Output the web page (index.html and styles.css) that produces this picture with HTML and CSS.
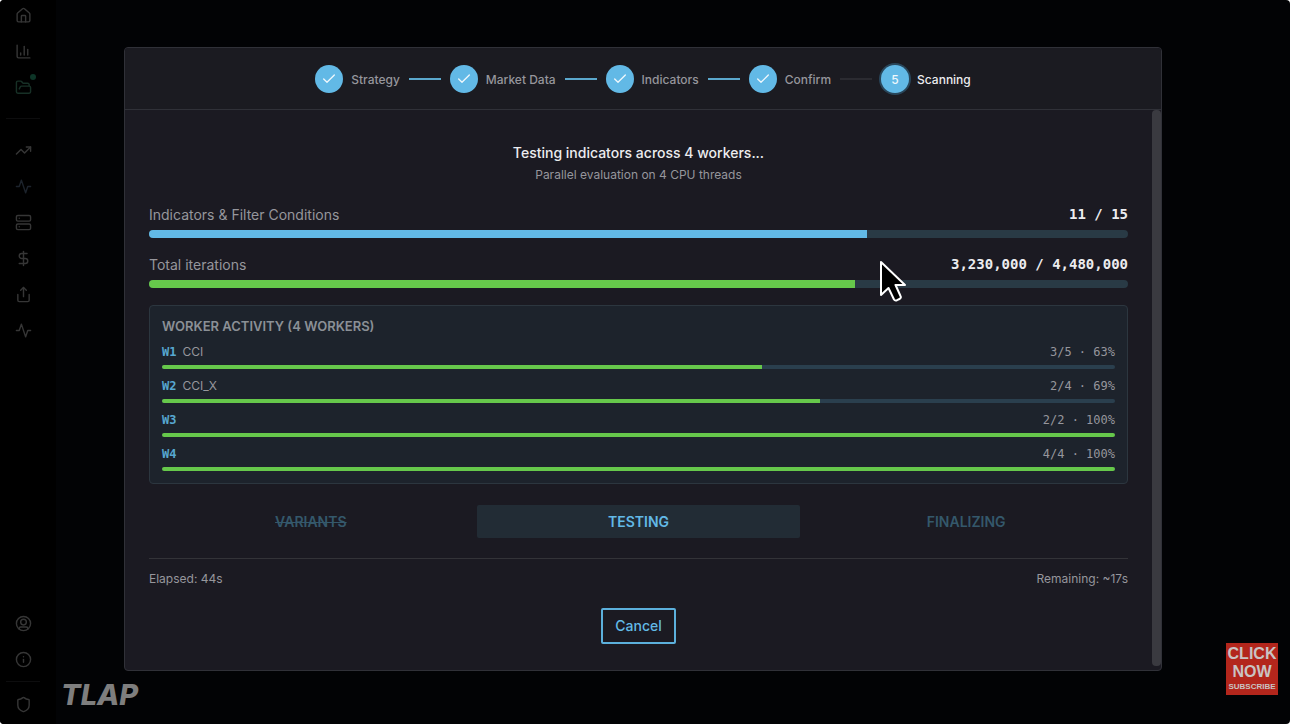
FILE: index.html
```html
<!DOCTYPE html>
<html lang="en">
<head>
    <meta charset="UTF-8">
    <meta name="viewport" content="width=device-width, initial-scale=1.0">
    <title>Indicator Scan</title>
    <link rel="stylesheet" href="styles.css">
</head>
<body>
    <div class="app">
        <nav class="sidebar" aria-label="Main">
            <div class="nav-group">
                <a href="#" class="nav-link" aria-label="Home">
                    <svg class="icon" viewBox="0 0 24 24"><path d="M15 21v-8a1 1 0 0 0-1-1h-4a1 1 0 0 0-1 1v8"/><path d="M3 10a2 2 0 0 1 .7-1.5l7-6a2 2 0 0 1 2.6 0l7 6A2 2 0 0 1 21 10v9a2 2 0 0 1-2 2H5a2 2 0 0 1-2-2z"/></svg>
                </a>
                <a href="#" class="nav-link" aria-label="Charts">
                    <svg class="icon" viewBox="0 0 24 24"><path d="M3 3v16a2 2 0 0 0 2 2h16"/><path d="M8 17v-3"/><path d="M13 17V5"/><path d="M18 17V9"/></svg>
                </a>
                <a href="#" class="nav-link active" aria-label="Projects">
                    <svg class="icon" viewBox="0 0 24 24"><path d="m6 14 1.5-2.9A2 2 0 0 1 9.2 10H20a2 2 0 0 1 2 2v6a2 2 0 0 1-2 2H4a2 2 0 0 1-2-2V5a2 2 0 0 1 2-2h3.9a2 2 0 0 1 1.7.9l.8 1.2a2 2 0 0 0 1.7.9H18a2 2 0 0 1 2 2v2"/></svg>
                    <span class="dot"></span>
                </a>
            </div>
            <div class="nav-group">
                <a href="#" class="nav-link" aria-label="Trends">
                    <svg class="icon" viewBox="0 0 24 24"><path d="M16 7h6v6"/><path d="m22 7-8.5 8.5-5-5L2 17"/></svg>
                </a>
                <a href="#" class="nav-link dim" aria-label="Signals">
                    <svg class="icon" viewBox="0 0 24 24"><path d="M22 12h-4l-3 9L9 3l-3 9H2"/></svg>
                </a>
                <a href="#" class="nav-link" aria-label="Servers">
                    <svg class="icon" viewBox="0 0 24 24"><rect x="2" y="2" width="20" height="8" rx="2"/><rect x="2" y="14" width="20" height="8" rx="2"/><path d="M6 6h.01M6 18h.01"/></svg>
                </a>
                <a href="#" class="nav-link" aria-label="Costs">
                    <svg class="icon" viewBox="0 0 24 24"><path d="M12 2v20"/><path d="M17 5H9.5a3.5 3.5 0 0 0 0 7h5a3.5 3.5 0 0 1 0 7H6"/></svg>
                </a>
                <a href="#" class="nav-link" aria-label="Export">
                    <svg class="icon" viewBox="0 0 24 24"><path d="M12 2v13"/><path d="m16 6-4-4-4 4"/><path d="M4 12v8a2 2 0 0 0 2 2h12a2 2 0 0 0 2-2v-8"/></svg>
                </a>
                <a href="#" class="nav-link" aria-label="Activity">
                    <svg class="icon" viewBox="0 0 24 24"><path d="M22 12h-4l-3 9L9 3l-3 9H2"/></svg>
                </a>
            </div>
            <div class="nav-group bottom">
                <a href="#" class="nav-link" aria-label="Account">
                    <svg class="icon" viewBox="0 0 24 24"><circle cx="12" cy="12" r="10"/><circle cx="12" cy="10" r="4"/><path d="M6 20v-1a2 2 0 0 1 2-2h8a2 2 0 0 1 2 2v1"/></svg>
                </a>
                <a href="#" class="nav-link" aria-label="About">
                    <svg class="icon" viewBox="0 0 24 24"><circle cx="12" cy="12" r="10"/><path d="M12 16v-4"/><path d="M12 8h.01"/></svg>
                </a>
            </div>
            <div class="nav-group">
                <a href="#" class="nav-link" aria-label="Security">
                    <svg class="icon" viewBox="0 0 24 24"><path d="M20 13c0 5-3.5 7.5-7.7 9a1 1 0 0 1-.6 0C7.5 20.5 4 18 4 13V6a1 1 0 0 1 1-1c2 0 4.5-1.2 6.2-2.7a1.2 1.2 0 0 1 1.6 0C14.5 3.8 17 5 19 5a1 1 0 0 1 1 1z"/></svg>
                </a>
            </div>
        </nav>

        <main class="stage">
            <section class="modal" role="dialog" aria-label="Scanning">
                <ol class="steps">
                    <li class="step done">
                        <span class="bullet"><svg viewBox="0 0 24 24"><path d="M20 6 9 17l-5-5"/></svg></span>
                        <span>Strategy</span>
                    </li>
                    <li class="step done">
                        <span class="bullet"><svg viewBox="0 0 24 24"><path d="M20 6 9 17l-5-5"/></svg></span>
                        <span>Market Data</span>
                    </li>
                    <li class="step done">
                        <span class="bullet"><svg viewBox="0 0 24 24"><path d="M20 6 9 17l-5-5"/></svg></span>
                        <span>Indicators</span>
                    </li>
                    <li class="step last-done">
                        <span class="bullet"><svg viewBox="0 0 24 24"><path d="M20 6 9 17l-5-5"/></svg></span>
                        <span>Confirm</span>
                    </li>
                    <li class="step current">
                        <span class="bullet">5</span>
                        <span>Scanning</span>
                    </li>
                </ol>

                <div class="modal-body">
                    <div class="content">
                        <h1>Testing indicators across 4 workers...</h1>
                        <p class="subtitle">Parallel evaluation on 4 CPU threads</p>

                        <div class="totals">
                            <div class="total">
                                <div class="row"><span>Indicators &amp; Filter Conditions</span><span class="count">11 / 15</span></div>
                                <div class="track"><div class="fill blue" style="width: 73.3%"></div></div>
                            </div>
                            <div class="total">
                                <div class="row"><span>Total iterations</span><span class="count">3,230,000 / 4,480,000</span></div>
                                <div class="track"><div class="fill" style="width: 72.1%"></div></div>
                            </div>
                        </div>

                        <div class="workers">
                            <h2>WORKER ACTIVITY (4 WORKERS)</h2>
                            <div class="worker">
                                <div class="row"><span><b>W1</b>CCI</span><span class="stat">3/5 · 63%</span></div>
                                <div class="track"><div class="fill" style="width: 63%"></div></div>
                            </div>
                            <div class="worker">
                                <div class="row"><span><b>W2</b>CCI_X</span><span class="stat">2/4 · 69%</span></div>
                                <div class="track"><div class="fill" style="width: 69%"></div></div>
                            </div>
                            <div class="worker">
                                <div class="row"><span><b>W3</b></span><span class="stat">2/2 · 100%</span></div>
                                <div class="track"><div class="fill" style="width: 100%"></div></div>
                            </div>
                            <div class="worker">
                                <div class="row"><span><b>W4</b></span><span class="stat">4/4 · 100%</span></div>
                                <div class="track"><div class="fill" style="width: 100%"></div></div>
                            </div>
                        </div>

                        <div class="phases">
                            <span class="phase finished">VARIANTS</span>
                            <span class="phase running">TESTING</span>
                            <span class="phase">FINALIZING</span>
                        </div>

                        <div class="times">
                            <span>Elapsed: 44s</span>
                            <span>Remaining: ~17s</span>
                        </div>

                        <button type="button" class="cancel">Cancel</button>
                    </div>
                    <div class="scrollbar"></div>
                </div>
            </section>
        </main>

        <div class="brand">TLAP</div>
        <a href="#" class="subscribe">
            <span>CLICK</span>
            <span>NOW</span>
            <small>SUBSCRIBE</small>
        </a>
        <svg class="cursor" viewBox="0 0 28 42"><path d="M2 2v33l7.5-7 5.5 11.5q1 1.5 3 .7l2.5-1.2q2-1 1-3L16.5 25H26z"/></svg>
    </div>
</body>
</html>
```

FILE: styles.css
```css
* {
    box-sizing: border-box;
}

body {
    margin: 0;
    background: #fff;
    font-family: Inter, "Liberation Sans", sans-serif;
    color: #96969c;
}

.app {
    position: relative;
    display: flex;
    min-height: 100vh;
    background: #020305;
    border-radius: 4px;
    overflow: hidden;
}

/* Sidebar */
.sidebar {
    display: flex;
    flex-direction: column;
    width: 56px;
    padding: 0 16px 5px 6px;
    background: #000;
}

.nav-group {
    display: flex;
    flex-direction: column;
    align-items: center;
    gap: 6px;
}

.nav-group + .nav-group {
    margin-top: 16px;
    padding-top: 16px;
    border-top: 1px solid #0d0d0e;
}

.nav-group + .nav-group.bottom {
    margin-top: auto;
    border-top: 0;
}

.nav-group.bottom + .nav-group {
    margin-top: 7px;
    padding-top: 7px;
}

.nav-link {
    position: relative;
    display: flex;
    align-items: center;
    justify-content: center;
    width: 30px;
    height: 30px;
    color: #363636;
}

.nav-link.active {
    color: #173026;
}

.nav-link.dim {
    color: #1c232c;
}

.icon {
    width: 17px;
    height: 17px;
    fill: none;
    stroke: currentColor;
    stroke-width: 2;
    stroke-linecap: round;
    stroke-linejoin: round;
}

.dot {
    position: absolute;
    top: 2px;
    right: 2px;
    width: 6px;
    height: 6px;
    border-radius: 50%;
    background: #0d3527;
}

/* Modal */
.stage {
    flex: 1;
    display: flex;
    padding: 47px 128px 53px 68px;
}

.modal {
    flex: 1;
    display: flex;
    flex-direction: column;
    background: #1b1a22;
    border: 1px solid #303138;
    border-radius: 4px;
    overflow: hidden;
}

.steps {
    display: flex;
    align-items: center;
    justify-content: center;
    gap: 8px;
    margin: 0;
    padding: 17px 0 16px;
    list-style: none;
    background: #1b1b21;
    border-bottom: 1px solid #303138;
}

.step {
    display: flex;
    align-items: center;
    gap: 8px;
    font-size: 12px;
    font-weight: 500;
}

.step.done::after,
.step.last-done::after {
    content: "";
    width: 32px;
    height: 2px;
    margin: 0 1px;
    background: #5ba8cd;
}

.step.last-done::after {
    background: #2b2b31;
}

.bullet {
    display: flex;
    align-items: center;
    justify-content: center;
    width: 28px;
    height: 28px;
    border-radius: 50%;
    background: #62b9e6;
    color: #eef7fc;
}

.bullet svg {
    width: 16px;
    height: 16px;
    fill: none;
    stroke: currentColor;
    stroke-width: 2;
    stroke-linecap: round;
    stroke-linejoin: round;
}

.step.current {
    color: #ececef;
}

.step.current .bullet {
    box-shadow: 0 0 0 2px #29465a;
}

.modal-body {
    flex: 1;
    display: flex;
}

.content {
    flex: 1;
    display: flex;
    flex-direction: column;
    padding: 32px 24px 24px;
}

.scrollbar {
    width: 9px;
    margin-bottom: 4px;
    border-radius: 4px;
    background: #3a3a40;
}

h1 {
    margin: 0;
    font-size: 14px;
    line-height: 22px;
    font-weight: 500;
    text-align: center;
    color: #ececef;
}

.subtitle {
    margin: 2px 0 20px;
    font-size: 12px;
    line-height: 18px;
    text-align: center;
}

.row {
    display: flex;
    justify-content: space-between;
}

.totals {
    display: flex;
    flex-direction: column;
    gap: 16px;
    margin-bottom: 17px;
    font-size: 14px;
    line-height: 21px;
}

.count,
.stat,
.worker b {
    font-family: "DejaVu Sans Mono", "Liberation Mono", monospace;
}

.count {
    font-weight: 700;
    color: #ececef;
}

.track {
    height: 8px;
    margin-top: 5px;
    border-radius: 4px;
    background: #293a45;
    overflow: hidden;
}

.fill {
    height: 100%;
    background: #66c84b;
}

.fill.blue {
    background: #62b9e6;
}

/* Worker panel */
.workers {
    display: flex;
    flex-direction: column;
    gap: 8px;
    padding: 12px;
    background: #1d232c;
    border: 1px solid #2c363f;
    border-radius: 4px;
}

h2 {
    margin: 0;
    font-size: 13px;
    line-height: 17px;
    font-weight: 600;
    color: #8b9096;
}

.worker {
    font-size: 12px;
    line-height: 18px;
}

.worker b {
    margin-right: 6px;
    color: #57a7d0;
}

.worker .track {
    height: 4px;
    margin-top: 4px;
    border-radius: 2px;
    background: #2a3f4e;
}

/* Phases */
.phases {
    display: grid;
    grid-template-columns: repeat(3, 1fr);
    gap: 4px;
    margin: 21px 0 20px;
}

.phase {
    font-size: 14px;
    line-height: 33px;
    font-weight: 600;
    text-align: center;
    color: #34586b;
    border-radius: 2px;
}

.phase.finished {
    text-decoration: line-through;
}

.phase.running {
    background: #222c35;
    color: #62b9e6;
}

.times {
    display: flex;
    justify-content: space-between;
    padding-top: 11px;
    border-top: 1px solid #333338;
    font-size: 12px;
    line-height: 18px;
}

.cancel {
    align-self: center;
    margin-top: 20px;
    padding: 0 12px;
    font-family: inherit;
    font-size: 14px;
    line-height: 32px;
    font-weight: 500;
    color: #62b9e6;
    background: transparent;
    border: 2px solid #5cb0dc;
    border-radius: 2px;
}

/* Overlays */
.brand {
    position: absolute;
    left: 61px;
    bottom: 12px;
    font-size: 29px;
    line-height: 34px;
    font-weight: 800;
    font-style: italic;
    color: #7e7e7e;
}

.subscribe {
    position: absolute;
    right: 12px;
    bottom: 29px;
    display: flex;
    flex-direction: column;
    align-items: center;
    justify-content: center;
    width: 52px;
    height: 52px;
    background: #b3261c;
    color: #c9c3c3;
    font-family: "Liberation Sans", sans-serif;
    font-size: 16px;
    line-height: 18px;
    font-weight: 700;
    text-decoration: none;
}

.subscribe small {
    font-size: 8px;
    line-height: 12px;
}

.cursor {
    position: absolute;
    left: 879px;
    top: 260px;
    width: 28px;
    height: 42px;
    fill: #000;
    stroke: #fff;
    stroke-width: 2;
    stroke-linejoin: round;
}
```
